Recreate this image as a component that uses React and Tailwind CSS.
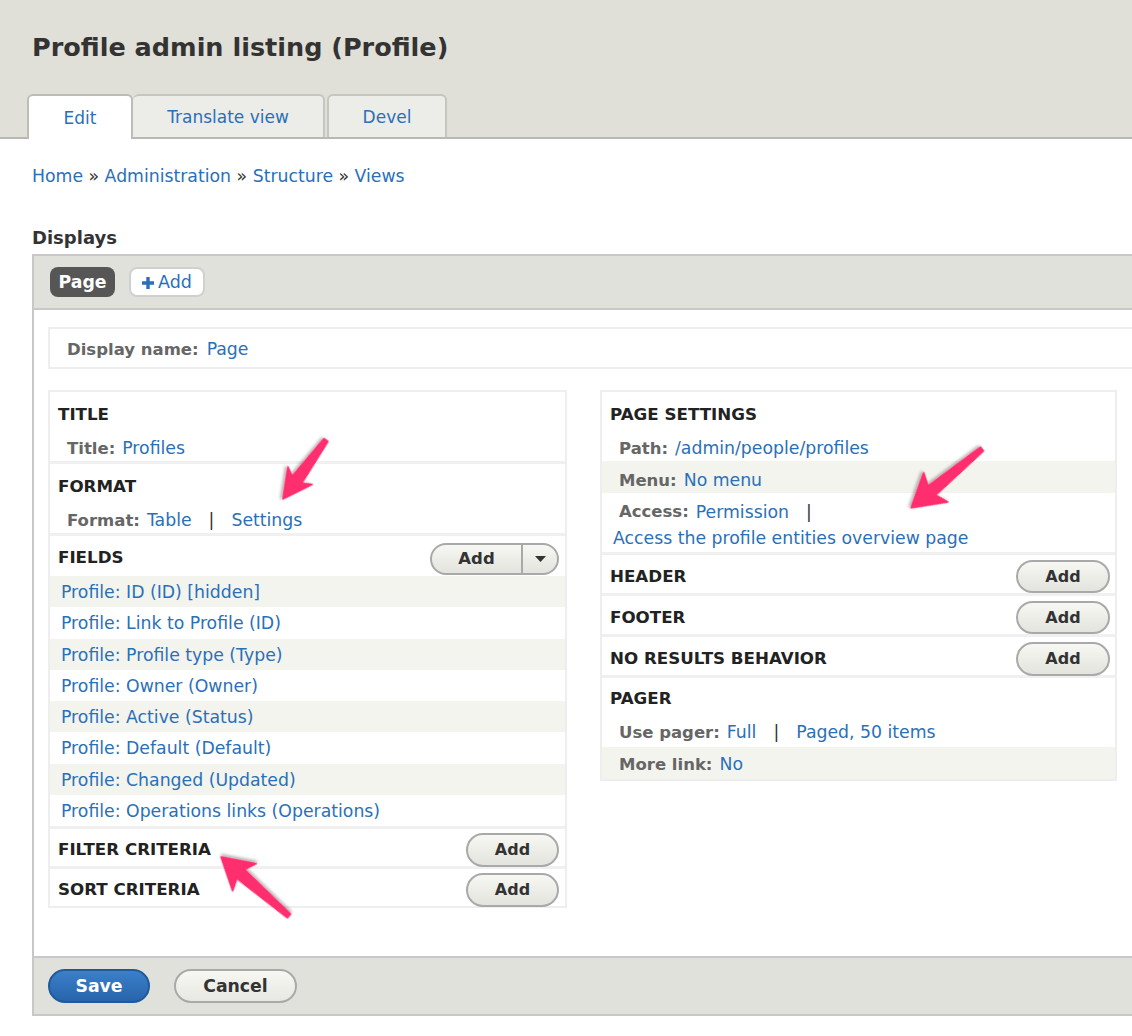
import clsx from 'clsx';

const fields = [
  'Profile: ID (ID) [hidden]',
  'Profile: Link to Profile (ID)',
  'Profile: Profile type (Type)',
  'Profile: Owner (Owner)',
  'Profile: Active (Status)',
  'Profile: Default (Default)',
  'Profile: Changed (Updated)',
  'Profile: Operations links (Operations)',
];

const Label = ({ children }) => (
  <span className="ml-[6px] mr-[7px] text-[16.5px] font-bold text-[#666]">{children}</span>
);

const Title = ({ children }) => (
  <span className="text-[16.7px] font-bold uppercase text-[#222]">{children}</span>
);

const Pipe = () => <span className="mx-[17px] text-[#333]">|</span>;

const AddButton = ({ className }) => (
  <button
    className={clsx(
      'flex items-center justify-center rounded-full border-2 border-[#a9a9a9] bg-linear-to-b from-[#f7f7f3] to-[#e4e4de] text-[16px] font-bold text-[#333]',
      className
    )}
  >
    Add
  </button>
);

// top rows sit a little lower than the pager rows
const Row = ({ shaded, low, children }) => (
  <div
    className={clsx(
      'flex h-[32px] items-center pl-[11px]',
      low ? 'pt-[8px]' : 'pt-[4px]',
      shaded && 'bg-[#f3f4ee]'
    )}
  >
    {children}
  </div>
);

const Head = ({ low, children }) => (
  <div className={clsx('flex h-[37px] items-center pl-[8px]', low ? 'pt-[9px]' : 'pt-[5px]')}>
    <Title>{children}</Title>
  </div>
);

// skitch style arrow, tail at 0,0 pointing along +x
const Arrow = ({ x, y, angle, len, head, wing }) => {
  const b = len - head;
  const d = `M0,-2.5 L${b + 5},-6 L${b},-${wing} L${len},0 L${b},${wing} L${b + 5},6 L0,2.5 Z`;
  return (
    <g transform={`translate(${x},${y}) rotate(${angle})`} filter="url(#shade)">
      <path d={d} fill="#ff2d6e" stroke="#ff2d6e" strokeWidth="1.5" strokeLinejoin="round" />
    </g>
  );
};

export default function App() {
  return (
    <div className="relative min-h-[1036px] w-[1132px] overflow-hidden bg-white font-['DejaVu_Sans',sans-serif] text-[17.3px] text-[#333]">
      {/* page header with tabs */}
      <div className="border-b-2 border-[#b9b9b3] bg-[#e0e0d8] pl-[27px]">
        <h1 className="pl-[5px] pt-[31px] text-[25.5px] font-bold leading-[32px] text-[#333]">
          Profile admin listing (Profile)
        </h1>
        <div className="mt-[31px] flex items-end text-[17px]">
          <a className="relative -mb-[2px] flex h-[45px] w-[106px] items-center justify-center rounded-t-[6px] border-2 border-b-0 border-[#bdbdb8] bg-white pt-[2px] text-[#2a70b8]">
            Edit
          </a>
          <a className="flex h-[43px] w-[192px] items-center justify-center rounded-t-[6px] border-2 border-b-0 border-l-0 border-[#c6c6c1] bg-[#ececE8] pt-[3px] text-[#2a70b8]">
            Translate view
          </a>
          <a className="ml-[2px] flex h-[43px] w-[120px] items-center justify-center rounded-t-[6px] border-2 border-b-0 border-[#c6c6c1] bg-[#ececE8] pt-[3px] text-[#2a70b8]">
            Devel
          </a>
        </div>
      </div>

      {/* breadcrumb */}
      <div className="mt-[25px] pl-[32px] leading-[24px]">
        <a className="text-[#2a70b8]">Home</a> » <a className="text-[#2a70b8]">Administration</a> »{' '}
        <a className="text-[#2a70b8]">Structure</a> » <a className="text-[#2a70b8]">Views</a>
      </div>

      <h2 className="mt-[38px] pl-[32px] text-[18px] font-bold leading-[24px] text-[#333]">Displays</h2>

      <div className="ml-[32px] mt-[4px] border-l-2 border-[#c8c8c8]">
        {/* display tabs */}
        <div className="flex h-[56px] items-center gap-[14px] border-y-2 border-[#c8c8c8] bg-[#e1e1dc] pl-[16px]">
          <span className="flex h-[30px] w-[65px] items-center justify-center rounded-[8px] bg-[#565656] pt-[1px] font-bold text-white">
            Page
          </span>
          <span className="flex h-[30px] w-[76px] items-center justify-center gap-[4px] rounded-[8px] border-2 border-[#d0d0d0] bg-white pt-[1px] text-[17.5px] text-[#2a70b8]">
            <svg width="12" height="12" viewBox="0 0 12 12">
              <path d="M4.3 0h3.4v4.3H12v3.4H7.7V12H4.3V7.7H0V4.3h4.3z" fill="#2a70b8" />
            </svg>
            Add
          </span>
        </div>

        <div className="pb-[48px] pl-[14px] pt-[17px]">
          <div className="flex h-[42px] items-center border-2 border-r-0 border-[#eeeeee] pl-[17px] pt-[4px]">
            <span className="mr-[8px] text-[16.5px] font-bold text-[#666]">Display name:</span>
            <a className="text-[#2a70b8]">Page</a>
          </div>

          <div className="mt-[21px] flex items-start gap-[33px]">
            {/* left column */}
            <div className="w-[519px] border-2 border-[#eeeeee]">
              <Head low>Title</Head>
              <Row low>
                <Label>Title:</Label>
                <a className="text-[#2a70b8]">Profiles</a>
              </Row>

              <div className="border-t-[3px] border-[#f0f0f0]">
                <Head low>Format</Head>
                <Row low>
                  <Label>Format:</Label>
                  <a className="text-[#2a70b8]">Table</a>
                  <Pipe />
                  <a className="text-[#2a70b8]">Settings</a>
                </Row>
              </div>

              <div className="border-t-[3px] border-[#f0f0f0]">
                <div className="flex h-[40px] items-center justify-between pl-[8px] pr-[6px] pt-[3px]">
                  <Title>Fields</Title>
                  <div className="mt-[3px] flex h-[32px] w-[129px] overflow-hidden rounded-full border-2 border-[#a9a9a9] bg-linear-to-b from-[#f7f7f3] to-[#e4e4de]">
                    <span className="flex w-[91px] items-center justify-center border-r-2 border-[#a9a9a9] text-[16.5px] font-bold text-[#333]">
                      Add
                    </span>
                    <span className="flex flex-1 items-center justify-center">
                      <svg width="11" height="6" viewBox="0 0 11 6">
                        <path d="M0 0h11L5.5 6z" fill="#333" />
                      </svg>
                    </span>
                  </div>
                </div>
                {fields.map((f, i) => (
                  <div
                    key={f}
                    className={clsx('flex h-[31.25px] items-center pl-[11px] pt-[3px]', i % 2 === 0 && 'bg-[#f3f4ee]')}
                  >
                    <a className="text-[#2a70b8]">{f}</a>
                  </div>
                ))}
              </div>

              <div className="flex h-[40px] items-center justify-between border-t-[3px] border-[#f0f0f0] pl-[8px] pr-[6px] pt-[4px]">
                <Title>Filter criteria</Title>
                <AddButton className="h-[34px] w-[93px]" />
              </div>
              <div className="flex h-[40px] items-center justify-between border-t-[3px] border-[#f0f0f0] pl-[8px] pr-[6px] pt-[4px]">
                <Title>Sort criteria</Title>
                <AddButton className="h-[34px] w-[93px]" />
              </div>
            </div>

            {/* right column */}
            <div className="w-[517px] border-2 border-[#eeeeee]">
              <Head low>Page settings</Head>
              <Row low>
                <Label>Path:</Label>
                <a className="text-[#2a70b8]">/admin/people/profiles</a>
              </Row>
              <Row shaded low>
                <Label>Menu:</Label>
                <a className="text-[#2a70b8]">No menu</a>
              </Row>
              <div className="pb-[1px] pl-[11px] pt-[6px] leading-[26px]">
                <div className="flex items-center">
                  <Label>Access:</Label>
                  <a className="text-[#2a70b8]">Permission</a>
                  <Pipe />
                </div>
                <a className="block text-[#2a70b8]">Access the profile entities overview page</a>
              </div>

              <div className="flex h-[41px] items-center justify-between border-t-[3px] border-[#f0f0f0] pl-[8px] pr-[5px] pt-[5px]">
                <Title>Header</Title>
                <AddButton className="h-[33px] w-[94px]" />
              </div>
              <div className="flex h-[41px] items-center justify-between border-t-[3px] border-[#f0f0f0] pl-[8px] pr-[5px] pt-[5px]">
                <Title>Footer</Title>
                <AddButton className="h-[33px] w-[94px]" />
              </div>
              <div className="flex h-[41px] items-center justify-between border-t-[3px] border-[#f0f0f0] pl-[8px] pr-[5px] pt-[5px]">
                <Title>No results behavior</Title>
                <AddButton className="h-[34px] w-[94px]" />
              </div>

              <div className="border-t-[3px] border-[#f0f0f0]">
                <Head>Pager</Head>
                <Row>
                  <Label>Use pager:</Label>
                  <a className="text-[#2a70b8]">Full</a>
                  <Pipe />
                  <a className="text-[#2a70b8]">Paged, 50 items</a>
                </Row>
                <Row shaded>
                  <Label>More link:</Label>
                  <a className="text-[#2a70b8]">No</a>
                </Row>
              </div>
            </div>
          </div>
        </div>

        {/* form actions */}
        <div className="flex h-[60px] items-center gap-[24px] border-y-2 border-[#c8c8c8] bg-[#e1e1dc] pl-[14px]">
          <button className="flex h-[34px] w-[102px] items-center justify-center rounded-full border-2 border-[#1f5a9b] bg-linear-to-b from-[#3b80c9] to-[#2764ab] pt-[1px] font-bold text-white">
            Save
          </button>
          <button className="flex h-[34px] w-[123px] items-center justify-center rounded-full border-2 border-[#a9a9a9] bg-linear-to-b from-[#f7f7f3] to-[#e8e8e2] pt-[1px] font-bold text-[#333]">
            Cancel
          </button>
        </div>
      </div>

      {/* annotation arrows */}
      <svg className="pointer-events-none absolute left-0 top-0" width="1132" height="1036">
        <defs>
          <filter id="shade" x="-20%" y="-20%" width="140%" height="140%">
            <feDropShadow dx="1" dy="2" stdDeviation="1.5" floodColor="#000" floodOpacity="0.3" />
          </filter>
        </defs>
        <Arrow x={326} y={440} angle={126.1} len={73} head={29} wing={15} />
        <Arrow x={982} y={449} angle={140.3} len={92} head={32} wing={19} />
        <Arrow x={289} y={916} angle={-139} len={90} head={31} wing={18} />
      </svg>
    </div>
  );
}
